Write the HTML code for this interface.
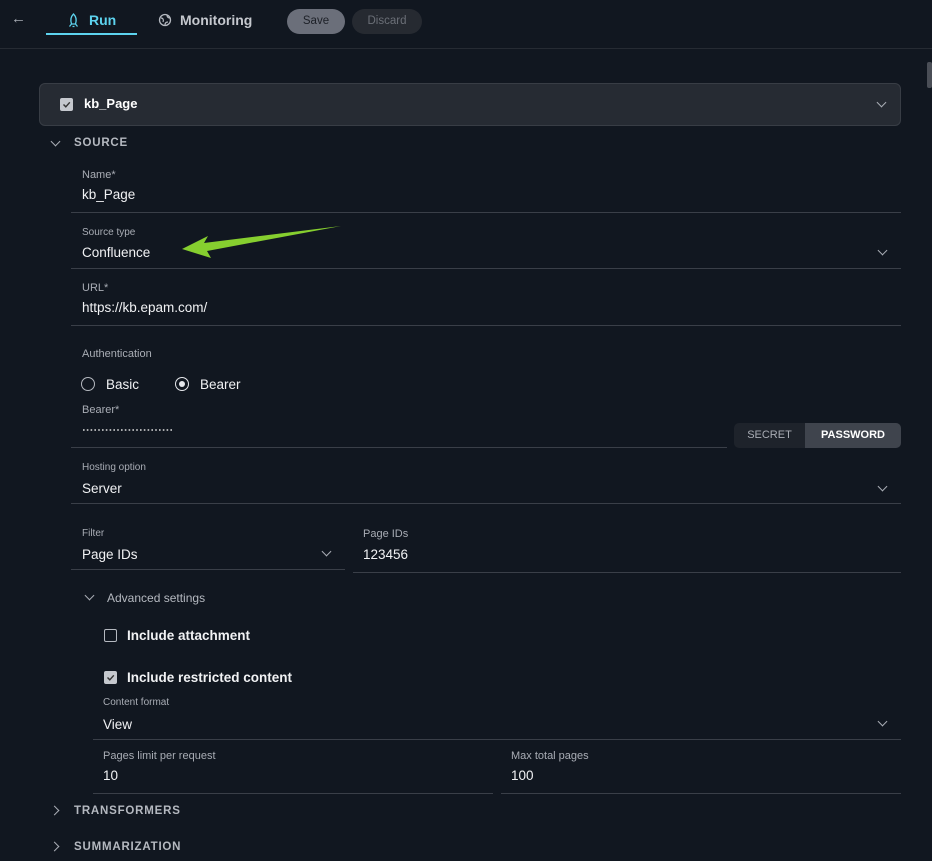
<!DOCTYPE html>
<html><head><style>
*{box-sizing:border-box;margin:0;padding:0}
body{width:932px;height:861px;background:#111720;font-family:"Liberation Sans",sans-serif;color:#e6e8ec;position:relative;overflow:hidden}
.a{position:absolute}
.lbl{position:absolute;font-size:10px;color:#a9adb5}
.val{position:absolute;font-size:13.5px;color:#f1f2f4}
.line{position:absolute;height:1px;background:#3a3f48}
.sec{position:absolute;font-size:11.5px;letter-spacing:0.8px;color:#b5b9c0;font-weight:bold}
.chev{position:absolute;width:7px;height:7px;border-right:1.5px solid #a9adb5;border-bottom:1.5px solid #a9adb5;transform:rotate(45deg)}
.chr{position:absolute;width:7px;height:7px;border-right:1.5px solid #a9adb5;border-bottom:1.5px solid #a9adb5;transform:rotate(-45deg)}
.cb{position:absolute;width:13px;height:13px;border-radius:2px}
</style></head><body>
<div class="a" style="left:11px;top:10px;font-size:15px;color:#a9adb5">←</div>
<svg class="a" style="left:67px;top:13px" width="13" height="15" viewBox="0 0 13 15"><path d="M6.5 1C3.5 4 3.5 8 4.5 11h4c1-3 1-7-2-10z M4.5 11l-2 2.5 M8.5 11l2 2.5 M5.5 13.5h2" fill="none" stroke="#5dd3ee" stroke-width="1.3"/></svg>
<div class="a" style="left:89px;top:12px;font-size:14px;font-weight:bold;color:#5dd3ee">Run</div>
<div class="a" style="left:46px;top:33px;width:91px;height:2px;background:#5dd3ee"></div>
<svg class="a" style="left:158px;top:13px" width="14" height="14" viewBox="0 0 14 14"><circle cx="7" cy="7" r="5.5" fill="none" stroke="#b5b9c0" stroke-width="1.3"/><path d="M3 5c2 0 3 2 2 4M9 2c0 2 1 3 3 3M7 12c0-2 1-3 3-3" fill="none" stroke="#b5b9c0" stroke-width="1.2"/></svg>
<div class="a" style="left:180px;top:12px;font-size:14px;font-weight:bold;color:#c5c8ce">Monitoring</div>
<div class="a" style="left:287px;top:9px;width:58px;height:25px;border-radius:13px;background:#6b6f7a;color:#1d2027;font-size:11.5px;text-align:center;line-height:25px">Save</div>
<div class="a" style="left:352px;top:9px;width:70px;height:25px;border-radius:13px;background:#262a31;color:#6b6f77;font-size:11.5px;text-align:center;line-height:25px">Discard</div>
<div class="line" style="left:0;top:48px;width:932px;background:#262b33"></div>
<div class="a" style="left:927px;top:62px;width:5px;height:26px;background:#4a4e56;border-radius:2px"></div>

<div class="a" style="left:39px;top:83px;width:862px;height:43px;background:#262b33;border:1px solid #383d45;border-radius:6px"></div>
<div class="cb" style="left:60px;top:98px;background:#c5c8ce"></div>
<svg class="a" style="left:61px;top:99px" width="11" height="11"><path d="M2.5 5.5l2.3 2.3 4-4.5" fill="none" stroke="#333" stroke-width="1.4"/></svg>
<div class="a" style="left:84px;top:96px;font-size:13px;font-weight:bold;color:#fff">kb_Page</div>
<div class="chev" style="left:878px;top:99px"></div>

<div class="chev" style="left:52px;top:138px"></div>
<div class="sec" style="left:74px;top:137px">SOURCE</div>

<div class="lbl" style="left:82px;top:169px;font-size:11px">Name*</div>
<div class="val" style="left:82px;top:187px">kb_Page</div>
<div class="line" style="left:71px;top:212px;width:830px"></div>

<div class="lbl" style="left:82px;top:227px">Source type</div>
<div class="val" style="left:82px;top:245px">Confluence</div>
<div class="chev" style="left:879px;top:247px"></div>
<div class="line" style="left:71px;top:268px;width:830px"></div>

<div class="lbl" style="left:82px;top:282px;font-size:11px">URL*</div>
<div class="val" style="left:82px;top:300px">https://kb.epam.com/</div>
<div class="line" style="left:71px;top:325px;width:830px"></div>

<div class="lbl" style="left:82px;top:348px;font-size:11px">Authentication</div>
<div class="a" style="left:81px;top:377px;width:14px;height:14px;border:1.5px solid #b5b9c0;border-radius:50%"></div>
<div class="val" style="left:106px;top:377px">Basic</div>
<div class="a" style="left:175px;top:377px;width:14px;height:14px;border:1.5px solid #e6e8ec;border-radius:50%"></div>
<div class="a" style="left:179px;top:381px;width:6px;height:6px;background:#e6e8ec;border-radius:50%"></div>
<div class="val" style="left:200px;top:377px">Bearer</div>
<div class="lbl" style="left:82px;top:404px;font-size:11px">Bearer*</div>
<svg class="a" style="left:82px;top:428px" width="92" height="4"><line x1="1" y1="2" x2="90" y2="2" stroke="#ddd" stroke-width="1.6" stroke-dasharray="1.6 2.2"/></svg>
<div class="line" style="left:71px;top:447px;width:656px"></div>
<div class="a" style="left:734px;top:423px;width:167px;height:25px;border-radius:5px;background:#1e232b;overflow:hidden">
<div class="a" style="left:0;top:0;width:71px;height:25px;line-height:25px;text-align:center;font-size:11px;color:#a9adb5">SECRET</div>
<div class="a" style="left:71px;top:0;width:96px;height:25px;line-height:25px;text-align:center;font-size:11px;color:#fff;background:#3f444d;font-weight:bold">PASSWORD</div></div>

<div class="lbl" style="left:82px;top:462px">Hosting option</div>
<div class="val" style="left:82px;top:481px">Server</div>
<div class="chev" style="left:879px;top:483px"></div>
<div class="line" style="left:71px;top:503px;width:830px"></div>

<div class="lbl" style="left:82px;top:528px">Filter</div>
<div class="val" style="left:82px;top:547px">Page IDs</div>
<div class="chev" style="left:323px;top:548px"></div>
<div class="line" style="left:71px;top:569px;width:274px"></div>
<div class="lbl" style="left:363px;top:528px;font-size:11px">Page IDs</div>
<div class="val" style="left:363px;top:547px">123456</div>
<div class="line" style="left:353px;top:572px;width:548px"></div>

<div class="chev" style="left:86px;top:592px"></div>
<div class="a" style="left:107px;top:591px;font-size:12px;color:#b5b9c0">Advanced settings</div>
<div class="cb" style="left:104px;top:629px;border:1.5px solid #b5b9c0"></div>
<div class="a" style="left:127px;top:628px;font-size:13.5px;font-weight:bold;color:#f1f2f4">Include attachment</div>
<div class="cb" style="left:104px;top:671px;background:#c5c8ce"></div>
<svg class="a" style="left:105px;top:672px" width="11" height="11"><path d="M2.5 5.5l2.3 2.3 4-4.5" fill="none" stroke="#333" stroke-width="1.4"/></svg>
<div class="a" style="left:127px;top:670px;font-size:13.5px;font-weight:bold;color:#f1f2f4">Include restricted content</div>
<div class="lbl" style="left:103px;top:697px">Content format</div>
<div class="val" style="left:103px;top:717px">View</div>
<div class="chev" style="left:879px;top:718px"></div>
<div class="line" style="left:93px;top:739px;width:808px"></div>
<div class="lbl" style="left:103px;top:750px;font-size:11px">Pages limit per request</div>
<div class="val" style="left:103px;top:768px">10</div>
<div class="line" style="left:93px;top:793px;width:400px"></div>
<div class="lbl" style="left:511px;top:750px;font-size:11px">Max total pages</div>
<div class="val" style="left:511px;top:768px">100</div>
<div class="line" style="left:501px;top:793px;width:400px"></div>

<div class="chr" style="left:51px;top:807px"></div>
<div class="sec" style="left:74px;top:805px">TRANSFORMERS</div>
<div class="chr" style="left:51px;top:843px"></div>
<div class="sec" style="left:74px;top:841px">SUMMARIZATION</div>

<svg class="a" style="left:0;top:0" width="932" height="861"><polygon points="182,249 208,236 204,243 341,226 207,251 211,258" fill="#86cf2f"/></svg>
</body></html>
